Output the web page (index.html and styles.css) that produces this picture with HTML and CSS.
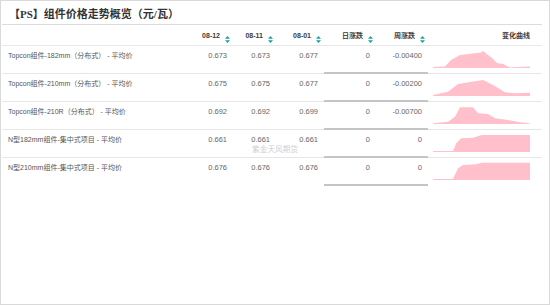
FILE: index.html
```html
<!DOCTYPE html>
<html>
<head>
<meta charset="utf-8">
<link rel="stylesheet" href="styles.css">
</head>
<body>
<div class="panel">
  <div class="title">【PS】组件价格走势概览（元/瓦）</div>
  <div class="tbl">
    <div class="row head">
      <div class="c name"></div>
      <div class="c hn"><span>08-12</span><svg class="sort" viewBox="0 0 5 7"><polygon points="2.5,0 5,2.8 0,2.8"/><polygon points="0,4.2 5,4.2 2.5,7"/></svg></div>
      <div class="c hn"><span>08-11</span><svg class="sort" viewBox="0 0 5 7"><polygon points="2.5,0 5,2.8 0,2.8"/><polygon points="0,4.2 5,4.2 2.5,7"/></svg></div>
      <div class="c hn"><span>08-01</span><svg class="sort" viewBox="0 0 5 7"><polygon points="2.5,0 5,2.8 0,2.8"/><polygon points="0,4.2 5,4.2 2.5,7"/></svg></div>
      <div class="c hn"><span>日涨跌</span><svg class="sort" viewBox="0 0 5 7"><polygon points="2.5,0 5,2.8 0,2.8"/><polygon points="0,4.2 5,4.2 2.5,7"/></svg></div>
      <div class="c hn"><span>周涨跌</span><svg class="sort" viewBox="0 0 5 7"><polygon points="2.5,0 5,2.8 0,2.8"/><polygon points="0,4.2 5,4.2 2.5,7"/></svg></div>
      <div class="c hc">变化曲线</div>
    </div>

    <div class="row">
      <div class="c name">Topcon组件-182mm（分布式） - 平均价</div>
      <div class="c num">0.673</div>
      <div class="c num">0.673</div>
      <div class="c num">0.677</div>
      <div class="c num d">0</div>
      <div class="c num d">-0.00400</div>
      <div class="c spark"><svg viewBox="0 0 97 18"><polygon points="0,18 0,17 12,16.5 18,10 27,5 48,2.5 50,1 55,5 59,8 64,13 70,14 77,17.5 84,17 97,16.5 97,18"/></svg></div>
    </div>

    <div class="row">
      <div class="c name">Topcon组件-210mm（分布式） - 平均价</div>
      <div class="c num">0.675</div>
      <div class="c num">0.675</div>
      <div class="c num">0.677</div>
      <div class="c num d">0</div>
      <div class="c num d">-0.00200</div>
      <div class="c spark"><svg viewBox="0 0 97 18"><polygon points="0,18 0,17 15,13.7 25,6 38.7,3.7 50,2 53.7,3.7 60,7 72,14.3 82,15.3 97,14.7 97,18"/></svg></div>
    </div>

    <div class="row">
      <div class="c name">Topcon组件-210R（分布式） - 平均价</div>
      <div class="c num">0.692</div>
      <div class="c num">0.692</div>
      <div class="c num">0.699</div>
      <div class="c num d">0</div>
      <div class="c num d">-0.00700</div>
      <div class="c spark"><svg viewBox="0 0 97 18"><polygon points="0,18 0,17.3 15,15.7 22,10.7 27,1.3 40,1.3 45,7.3 55,8 62,12.3 75,14 87,16.3 97,17.5 97,18"/></svg></div>
    </div>

    <div class="row">
      <div class="c name">N型182mm组件-集中式项目 - 平均价</div>
      <div class="c num">0.661</div>
      <div class="c num">0.661</div>
      <div class="c num">0.661</div>
      <div class="c num d">0</div>
      <div class="c num d">0</div>
      <div class="c spark"><svg viewBox="0 0 97 18"><polygon points="0,18 0,17 20,17 23.3,9.3 28.3,4.3 40,3.7 48.7,1 97,1 97,18"/></svg></div>
    </div>

    <div class="row last">
      <div class="c name">N型210mm组件-集中式项目 - 平均价</div>
      <div class="c num">0.676</div>
      <div class="c num">0.676</div>
      <div class="c num">0.676</div>
      <div class="c num d">0</div>
      <div class="c num d">0</div>
      <div class="c spark"><svg viewBox="0 0 97 18"><polygon points="0,18 0,17 20,17 25,6.3 30,3 43,2.3 48.7,0.7 97,0.7 97,18"/></svg></div>
    </div>
  </div>
  <div class="wm">紫金天风期货</div>
</div>
</body>
</html>
```

FILE: styles.css
```css
html, body {
  margin: 0;
  padding: 0;
  background: #ffffff;
}

.panel {
  position: relative;
  box-sizing: border-box;
  width: 550px;
  height: 305px;
  border: 1px solid #d9d9d9;
  font-family: "Liberation Sans", Arial, "Noto Sans CJK SC", sans-serif;
  color: #666666;
}

.title {
  box-sizing: border-box;
  height: 23px;
  padding: 6px 0 0 8px;
  font-family: "Liberation Serif", "Noto Sans CJK SC", serif;
  font-weight: bold;
  font-size: 11px;
  line-height: 14px;
  color: #333333;
  white-space: nowrap;
}

.tbl {
  margin: 0 7px 0 1px;
}

.row {
  display: grid;
  grid-template-columns: 186px 45px 43px 48px 52px 52px 114px;
}

.head {
  border-top: 1px solid #dcdcdc;
  border-bottom: 1px solid #e8e8e8;
  height: 22px;
  box-sizing: border-box;
}

.head .c {
  display: flex;
  align-items: center;
  justify-content: flex-end;
  font-weight: bold;
  font-size: 7px;
  color: #3a3a3a;
  white-space: nowrap;
}

.head .hn {
  padding-right: 3px;
  gap: 5px;
}

.head .hc {
  padding-right: 12px;
}

.sort {
  width: 5px;
  height: 7px;
  fill: #1fa297;
  align-self: flex-end;
  margin-bottom: 2px;
}

.row:not(.head) .c {
  box-sizing: border-box;
  height: 28px;
  border-bottom: 1px solid #e6e6e6;
}

.row:not(.head) .d {
  border-bottom: 2px solid #c4c4c4;
}

.row.last .c {
  border-bottom-color: transparent;
}

.row.last .d {
  border-bottom-color: #c4c4c4;
}

.name {
  padding: 5px 0 0 6px;
  font-size: 7px;
  line-height: 10px;
  color: #555555;
  white-space: nowrap;
}

.num {
  padding: 5px 6px 0 0;
  text-align: right;
  font-size: 7.5px;
  line-height: 10px;
  color: #666666;
}

.spark {
  padding: 4px 12px 0 5px;
}

.spark svg {
  display: block;
  width: 97px;
  height: 18px;
  fill: #ffc0cb;
}

.wm {
  position: absolute;
  left: 251px;
  top: 144px;
  font-size: 7.7px;
  line-height: 10px;
  color: #cfcfcf;
  white-space: nowrap;
}
```
